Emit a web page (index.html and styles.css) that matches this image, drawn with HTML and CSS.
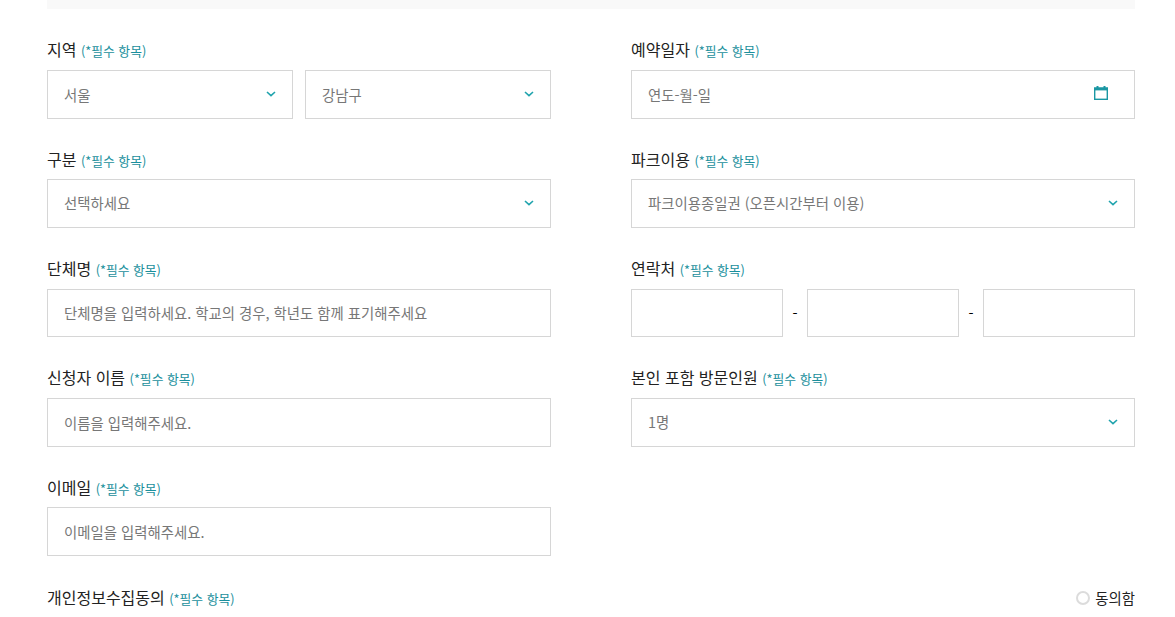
FILE: index.html
```html
<!DOCTYPE html>
<html lang="ko">
<head>
<meta charset="utf-8">
<title>예약</title>
<link rel="stylesheet" href="styles.css">
</head>
<body>
<div class="page">
  <div class="band"></div>
  <form class="form">
    <div class="field">
      <div class="label">지역 <span class="req">(*필수 항목)</span></div>
      <div class="pair">
        <div class="box"><span class="val inp">서울</span><svg class="chev" viewBox="0 0 10 6"><path d="M1 1l4 3.6L9 1"/></svg></div>
        <div class="box"><span class="val inp">강남구</span><svg class="chev" viewBox="0 0 10 6"><path d="M1 1l4 3.6L9 1"/></svg></div>
      </div>
    </div>
    <div class="field">
      <div class="label">예약일자 <span class="req">(*필수 항목)</span></div>
      <div class="box"><span class="val inp">연도-월-일</span>
        <svg class="cal" viewBox="0 0 14 14"><path d="M2.5 0h2v1.2h5V0h2v1.2H14V14H0V1.2h2.5z" fill="#1a97a3"/><rect x="1.4" y="4.4" width="11.2" height="8.2" fill="#fff"/></svg>
      </div>
    </div>
    <div class="field">
      <div class="label">구분 <span class="req">(*필수 항목)</span></div>
      <div class="box"><span class="val sel">선택하세요</span><svg class="chev" viewBox="0 0 10 6"><path d="M1 1l4 3.6L9 1"/></svg></div>
    </div>
    <div class="field">
      <div class="label">파크이용 <span class="req">(*필수 항목)</span></div>
      <div class="box"><span class="val sel">파크이용종일권 (오픈시간부터 이용)</span><svg class="chev" viewBox="0 0 10 6"><path d="M1 1l4 3.6L9 1"/></svg></div>
    </div>
    <div class="field">
      <div class="label">단체명 <span class="req">(*필수 항목)</span></div>
      <div class="box"><span class="val inp">단체명을 입력하세요. 학교의 경우, 학년도 함께 표기해주세요</span></div>
    </div>
    <div class="field">
      <div class="label">연락처 <span class="req">(*필수 항목)</span></div>
      <div class="phone">
        <div class="box"></div><span class="dash">-</span>
        <div class="box"></div><span class="dash">-</span>
        <div class="box"></div>
      </div>
    </div>
    <div class="field">
      <div class="label">신청자 이름 <span class="req">(*필수 항목)</span></div>
      <div class="box"><span class="val inp">이름을 입력해주세요.</span></div>
    </div>
    <div class="field">
      <div class="label">본인 포함 방문인원 <span class="req">(*필수 항목)</span></div>
      <div class="box"><span class="val sel">1명</span><svg class="chev" viewBox="0 0 10 6"><path d="M1 1l4 3.6L9 1"/></svg></div>
    </div>
    <div class="field">
      <div class="label">이메일 <span class="req">(*필수 항목)</span></div>
      <div class="box"><span class="val inp">이메일을 입력해주세요.</span></div>
    </div>
    <div class="field"></div>
    <div class="agree">
      <div class="label">개인정보수집동의 <span class="req">(*필수 항목)</span></div>
      <div class="check"><span class="radio"></span>동의함</div>
    </div>
  </form>
</div>
</body>
</html>
```

FILE: styles.css
```css
* { box-sizing: border-box; }
html, body { margin: 0; padding: 0; background: #fff; overflow: hidden; }
body { font-family: "Noto Sans CJK KR", "Noto Sans", sans-serif; height: 617px; }
.page { padding: 0 40px 0 47px; }
.band { height: 9px; background: #f9f9f9; }
.form {
  display: grid;
  grid-template-columns: 504px 504px;
  column-gap: 80px;
  row-gap: 0;
  padding-top: 29.2px;
}
.field { height: 109.33px; }
.label {
  font-size: 16px;
  line-height: 22px;
  height: 31.8px;
  color: #222;
  white-space: nowrap;
}
.req { font-size: 12.8px; color: #1a8f9c; }
.box {
  display: flex;
  align-items: center;
  justify-content: space-between;
  height: 48.67px;
  border: 1px solid #d6d6d6;
  padding: 0 16px;
  background: #fff;
  flex: 1 1 0;
  min-width: 0;
}
.val { font-size: 14.4px; line-height: 20px; color: #777; white-space: nowrap; }
.sel { margin-top: -1px; }
.inp { margin-top: 1px; }
.pair { display: flex; gap: 12px; }
.pair .chev { margin-right: 0.5px; }
.pair .box + .box .chev { margin-right: 0; }
.phone { display: flex; align-items: center; }
.dash { width: 24px; text-align: center; font-size: 14.4px; color: #000; }
.chev { width: 10px; height: 6px; margin-top: -1px; flex: none; }
.chev path { fill: none; stroke: #1fa3ad; stroke-width: 1.6; }
.cal { width: 14px; height: 14px; margin-top: -3px; flex: none; margin-right: 10px; }
.agree {
  grid-column: 1 / -1;
  display: flex;
  justify-content: space-between;
  align-items: flex-start;
  padding-top: 1.2px;
}
.check { display: flex; align-items: center; font-size: 14.4px; color: #222; line-height: 22px; gap: 5px; padding-top: 1px; }
.radio { width: 14px; height: 14px; border: 2px solid #dcdcdc; border-radius: 50%; background: #fff; }
```
